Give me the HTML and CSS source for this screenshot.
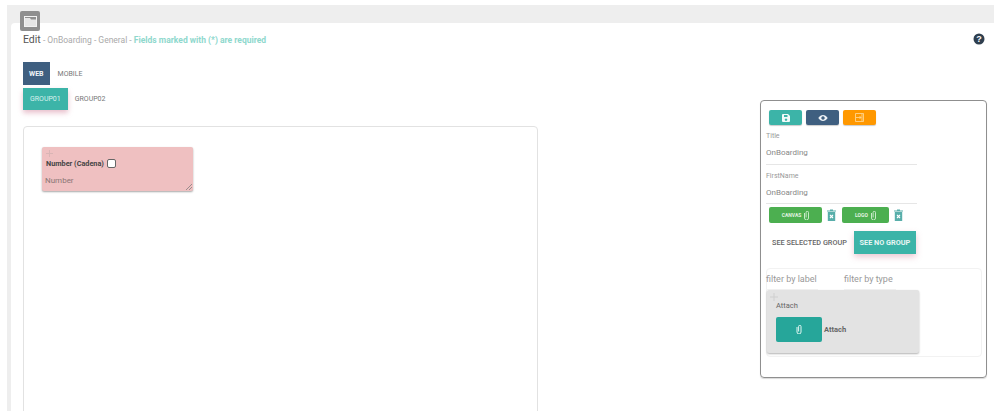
FILE: index.html
```html
<!DOCTYPE html>
<html lang="en">
   <head>
      <meta charset="UTF-8">
      <meta name="viewport" content="width=device-width, initial-scale=1.0">
      <title>Edit OnBoarding</title>
      <link rel="stylesheet" href="styles.css">
   </head>
   <body>
      <div class="page">
         <div class="corner-icon">
            <svg width="13" height="11" viewBox="0 0 13 11"><rect x=".5" y=".5" width="12" height="10" fill="#8f8f8f" stroke="#f2f2f2"/><path d="M1 2h5l1 1.500h5V10H1z" fill="#e6e6e6"/></svg>
         </div>
         <div class="sheet">
            <div class="head">
               <p class="crumbs"><span class="crumb-main">Edit</span> - OnBoarding - General - <strong class="crumb-note">Fields marked with (*) are required</strong></p>
               <svg class="help" width="12" height="12" viewBox="0 0 12 12"><circle cx="6" cy="6" r="5.5" fill="#2f3f4f"/><text x="6" y="9.2" text-anchor="middle" class="help-mark">?</text></svg>
            </div>
            <div class="columns">
               <div class="left">
                  <div class="tabs tabs-web">
                     <span class="tab tab-navy">WEB</span>
                     <span class="tab">MOBILE</span>
                  </div>
                  <div class="tabs tabs-group">
                     <span class="tab tab-teal">GROUP01</span>
                     <span class="tab">GROUP02</span>
                  </div>
                  <div class="canvas">
                     <div class="field-card">
                        <svg class="move" width="7" height="7" viewBox="0 0 7 7"><path d="M3.5 0v7M0 3.5h7" stroke="#d9b5b5" stroke-width="1"/></svg>
                        <div class="field-label"><b>Number (Cadena)</b><span class="check"></span></div>
                        <div class="field-hint">Number</div>
                        <svg class="grip" width="6" height="6" viewBox="0 0 6 6"><path d="M0 6l6-6M3 6l3-3" stroke="#777" stroke-width=".7"/></svg>
                     </div>
                  </div>
               </div>
               <aside class="panel">
                  <div class="actions">
                     <span class="act act-teal"><svg width="8" height="8" viewBox="0 0 8 8"><path d="M0 1a1 1 0 0 1 1-1h5l2 2v5a1 1 0 0 1-1 1H1a1 1 0 0 1-1-1zM2 1v2h3.500V1zM4 4.500a1.200 1.200 0 1 0 .01 0z" fill="#f2fbfa" fill-rule="evenodd"/></svg></span>
                     <span class="act act-navy"><svg width="10" height="6" viewBox="0 0 11 7"><path d="M0 3.500C1.500 1 3.500 0 5.500 0s4 1 5.500 3.500C9.500 6 7.500 7 5.500 7S1.500 6 0 3.500zM5.500 1.500a2 2 0 1 0 .01 0z" fill="#eef2f6" fill-rule="evenodd"/></svg></span>
                     <span class="act act-orange"><svg width="9" height="9" viewBox="0 0 9 9"><path d="M.5.5h8v8h-8zM1 4.500h5M4.500 3l1.500 1.500L4.500 6M7 1v7" fill="none" stroke="#ffdca0" stroke-width=".8"/></svg></span>
                  </div>
                  <div class="text-field">
                     <label>Title</label>
                     <div class="value">OnBoarding</div>
                  </div>
                  <div class="text-field">
                     <label>FirstName</label>
                     <div class="value">OnBoarding</div>
                  </div>
                  <div class="uploads">
                     <span class="upload upload-wide">CANVAS <svg class="clip" width="5" height="9" viewBox="0 0 5 9"><path d="M.5 2v5a2 2 0 0 0 4 0V1.500a1.200 1.200 0 0 0-2.400 0V6.500" fill="none" stroke="#d6f0d6" stroke-width=".9"/></svg></span>
                     <svg class="trash" width="9" height="12" viewBox="0 0 9 12"><path d="M0 1.500h9v1H0zM3 .5h3v1H3zM.8 3h7.400v9H.8z" fill="#58aeaa"/><path d="M3 6l3 3M6 6l-3 3" stroke="#fff" stroke-width="1.100"/></svg>
                     <span class="upload upload-narrow">LOGO <svg class="clip" width="5" height="9" viewBox="0 0 5 9"><path d="M.5 2v5a2 2 0 0 0 4 0V1.500a1.200 1.200 0 0 0-2.400 0V6.500" fill="none" stroke="#d6f0d6" stroke-width=".9"/></svg></span>
                     <svg class="trash" width="9" height="12" viewBox="0 0 9 12"><path d="M0 1.500h9v1H0zM3 .5h3v1H3zM.8 3h7.400v9H.8z" fill="#58aeaa"/><path d="M3 6l3 3M6 6l-3 3" stroke="#fff" stroke-width="1.100"/></svg>
                  </div>
                  <div class="group-switch">
                     <span class="switch">SEE SELECTED GROUP</span>
                     <span class="switch switch-on">SEE NO GROUP</span>
                  </div>
                  <div class="library">
                     <div class="filters">
                        <span class="filter filter-label">filter by label</span>
                        <span class="filter filter-type">filter by type</span>
                     </div>
                     <div class="lib-item">
                        <svg class="lib-move" width="8" height="8" viewBox="0 0 8 8"><path d="M4 0v8M0 4h8" stroke="#cfcfcf" stroke-width="1"/></svg>
                        <div class="lib-name">Attach</div>
                        <div class="lib-row">
                           <span class="lib-btn"><svg width="6" height="9" viewBox="0 0 6 9"><path d="M1 2v5a2 2 0 0 0 4 0V1.500a1.200 1.200 0 0 0-2.400 0V6.500" fill="none" stroke="#dff5f1" stroke-width="1"/></svg></span>
                           <b>Attach</b>
                        </div>
                     </div>
                  </div>
               </aside>
            </div>
         </div>
      </div>
   </body>
</html>
```

FILE: styles.css
```css
html, body { margin: 0; height: 411px; overflow: hidden; background: #fff; }
body { font-family: Roboto, "Liberation Sans", sans-serif; color: #555; font-size: 8px; }
.page { position: relative; margin: 5px 13px 0 7px; padding: 18px 0 0 4px; height: 388px; background: #eee; }
.corner-icon { position: absolute; left: 13px; top: 6px; width: 20px; height: 20px; border-radius: 2px; background: #8f8f8f; display: flex; align-items: center; justify-content: center; }
.sheet { background: #fff; height: 388px; border-radius: 4px 0 0 0; padding-left: 12px; box-sizing: border-box; }
.head { display: flex; justify-content: space-between; align-items: center; padding: 10px 9px 0 0; height: 12px; }
.crumbs { margin: 0; font-size: 8.500px; color: #aaa; }
.crumb-main { font-size: 10.500px; color: #555; }
.crumb-note { color: #8ed8cd; font-weight: 700; }
.help { display: block; }
.help-mark { font: 700 9px "Liberation Sans", sans-serif; fill: #fff; }
.columns { display: flex; justify-content: space-between; padding-right: 7px; }
.left { width: 515px; }
.tabs { display: flex; align-items: center; }
.tabs-web { margin-top: 17px; }
.tabs-group { margin-top: 3px; }
.tab { display: flex; align-items: center; font-size: 7px; padding: 0 7px; color: #777; }
.tab-navy { height: 23px; padding: 0 6px; background: #3f5f80; color: #f2f5f8; font-weight: 700; margin-right: 1px; }
.tab-teal { height: 22px; background: #3cb4a8; color: #d9f1ee; box-shadow: 0 3px 5px rgba(200, 100, 130, .4); }
.canvas { margin-top: 16px; height: 300px; border: 1px solid #e2e2e2; border-radius: 4px; box-sizing: border-box; padding: 20px 18px; }
.field-card { position: relative; width: 151px; height: 44px; box-sizing: border-box; background: #efc0c1; border-radius: 2px; box-shadow: 0 1px 2px rgba(0, 0, 0, .35); padding: 12px 4px 0; color: #444; }
.move { position: absolute; left: 4px; top: 3px; }
.field-label { display: flex; align-items: center; gap: 3px; font-size: 7.300px; color: #444; }
.check { width: 7px; height: 7px; background: #fff; border: 1px solid #666; border-radius: 2px; }
.field-hint { margin-top: 8px; margin-left: -1px; font-size: 8px; color: #8a7676; }
.grip { position: absolute; right: 1px; bottom: 1px; }
.panel { width: 227px; height: 278px; margin-top: 55px; box-sizing: border-box; border: 1px solid #8f8f8f; border-radius: 4px; padding: 9px 5px 0; box-shadow: 0 1px 1px rgba(0, 0, 0, .15); }
.actions { display: flex; gap: 4px; padding-left: 3px; }
.act { width: 33px; height: 15px; border-radius: 2px; display: flex; align-items: center; justify-content: center; box-shadow: 0 1px 1px rgba(0, 0, 0, .2); }
.act-teal { background: #3cb4a8; }
.act-navy { background: #3f5f80; }
.act-orange { background: #ff9800; }
.text-field { width: 151px; border-bottom: 1px solid #e6e6e6; height: 39.500px; box-sizing: border-box; padding-top: 7px; }
.text-field label { display: block; font-size: 7px; color: #999; }
.text-field .value { margin-top: 8px; font-size: 8px; color: #888; }
.uploads { display: flex; align-items: center; padding: 3px 0 0 3px; }
.upload { height: 16px; border-radius: 2px; background: #4caf50; color: #e3f3e3; font-size: 5px; font-weight: 700; display: flex; align-items: center; justify-content: center; gap: 3px; box-sizing: border-box; }
.upload-wide { width: 53px; }
.upload-narrow { width: 47px; }
.trash { margin: 0 6px 0 5px; }
.group-switch { display: flex; align-items: center; margin-top: 8px; padding-left: 6px; }
.switch { font-size: 7.300px; color: #666; padding: 0 7px 0 0; font-weight: 500; }
.switch-on { height: 23px; width: 62px; padding: 0; display: flex; align-items: center; justify-content: center; background: #3cb4a8; color: #e8f6f4; font-weight: 700; box-shadow: 0 3px 6px rgba(200, 100, 130, .35); }
.library { width: 216px; height: 89px; margin-top: 14px; box-sizing: border-box; border: 1px solid #f2f2f2; border-radius: 4px; }
.filters { display: flex; height: 21px; align-items: center; }
.filter { font-size: 9px; color: #999; border-bottom: 1px solid #f4f4f4; height: 21px; line-height: 20px; box-sizing: border-box; }
.filter-label { width: 52px; margin-left: -1px; }
.filter-type { width: 52px; margin-left: 26px; }
.lib-item { position: relative; width: 152px; height: 63px; box-sizing: border-box; background: #e3e3e3; border-radius: 2px; box-shadow: 0 1px 2px rgba(0, 0, 0, .3); padding: 11px 9px 0; font-size: 7.500px; color: #666; }
.lib-move { position: absolute; left: 3px; top: 3px; }
.lib-name { color: #666; }
.lib-row { display: flex; align-items: center; gap: 2px; margin-top: 7px; }
.lib-btn { width: 46px; height: 25px; border-radius: 2px; background: #26a69a; display: flex; align-items: center; justify-content: center; }
```
